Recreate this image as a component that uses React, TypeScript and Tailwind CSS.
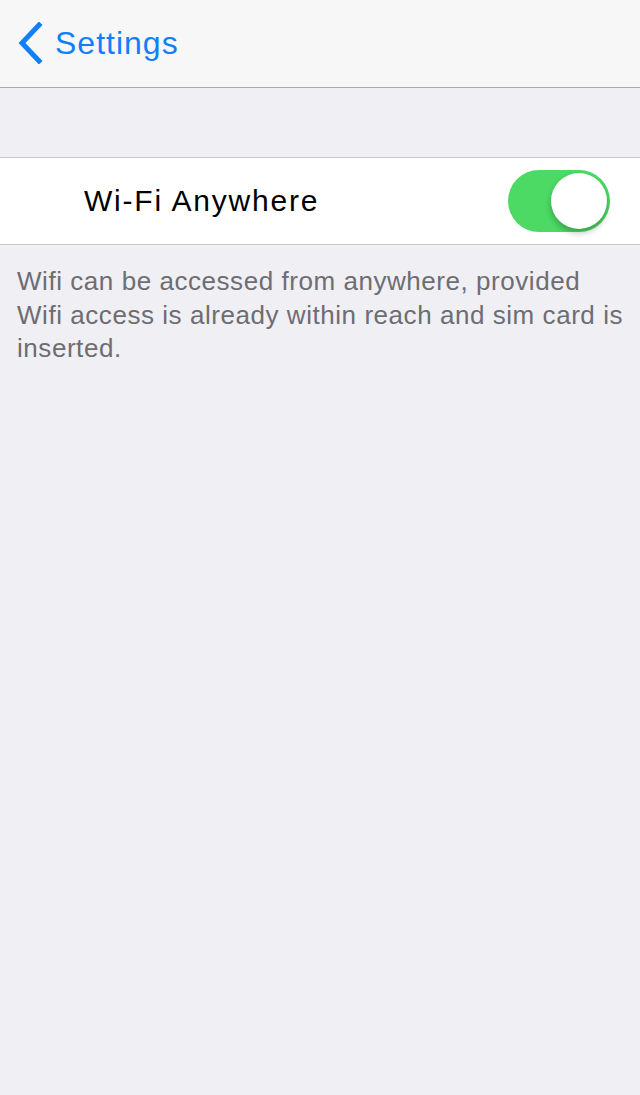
import React from "react";

const App: React.FC = () => {
  return (
    <div
      className="min-h-[1095px] w-[640px] bg-[#efeff4]"
      style={{ fontFamily: '"Liberation Sans", Arial, sans-serif' }}
    >
      {/* Nav bar */}
      <div className="h-[88px] bg-[#f7f7f7] border-b border-[#a7a7aa] flex items-center pl-[17px]">
        <svg width="26" height="42" viewBox="0 0 26 42" className="mt-[-2px]">
          <path
            d="M22 3 L5 21 L22 39"
            fill="none"
            stroke="#137efb"
            strokeWidth="5"
            strokeLinecap="square"
          />
        </svg>
        <span className="ml-[12px] text-[32px] tracking-[1px] text-[#137efb] leading-none mt-[-1px]">
          Settings
        </span>
      </div>

      {/* Cell */}
      <div className="mt-[69px] h-[88px] bg-white border-y border-[#c8c7cc] flex items-center justify-between">
        <span className="pl-[84px] text-[30px] tracking-[1.8px] text-black leading-none">Wi-Fi Anywhere</span>
        <div className="mr-[30px] w-[102px] h-[62px] rounded-full bg-[#4cd964] relative">
          <div className="absolute right-[3px] top-[3px] w-[56px] h-[56px] rounded-full bg-white shadow-[0_4px_6px_rgba(0,0,0,0.25)]" />
        </div>
      </div>

      {/* Footer */}
      <p className="pl-[17px] pt-[20px] whitespace-nowrap text-[26px] tracking-[0.55px] leading-[33.5px] text-[#6d6d72]">
        Wifi can be accessed from anywhere, provided
        <br />
        Wifi access is already within reach and sim card is
        <br />
        inserted.
      </p>
    </div>
  );
};

export default App;
